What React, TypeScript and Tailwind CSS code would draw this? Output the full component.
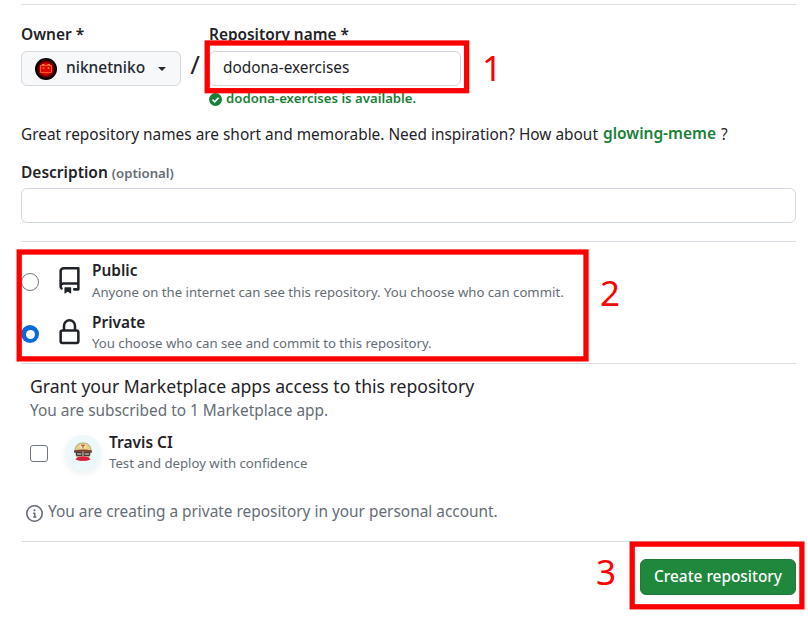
import React from "react";

const Divider = () => <div className="h-px w-full shrink-0 bg-[#d8dee4]" />;

const RepoIcon = () => (
  <svg viewBox="0 0 16 16" className="h-[27px] w-[27px]" fill="#1f2328">
    <path d="M2 2.5A2.5 2.5 0 0 1 4.5 0h8.75a.75.75 0 0 1 .75.75v12.5a.75.75 0 0 1-.75.75h-2.5a.75.75 0 0 1 0-1.5h1.75v-2h-8a1 1 0 0 0-.714 1.7.75.75 0 1 1-1.072 1.05A2.495 2.495 0 0 1 2 11.5Zm10.5-1h-8a1 1 0 0 0-1 1v6.708A2.486 2.486 0 0 1 4.5 9h8ZM5 12.25a.25.25 0 0 1 .25-.25h3.5a.25.25 0 0 1 .25.25v3.25a.25.25 0 0 1-.4.2l-1.45-1.087a.249.249 0 0 0-.3 0L5.4 15.7a.25.25 0 0 1-.4-.2Z" />
  </svg>
);

const LockIcon = () => (
  <svg viewBox="0 0 16 16" className="h-[27px] w-[27px]" fill="#1f2328">
    <path d="M4 4a4 4 0 0 1 8 0v2h.25c.966 0 1.75.784 1.75 1.75v5.5A1.75 1.75 0 0 1 12.25 15h-8.5A1.75 1.75 0 0 1 2 13.25v-5.5C2 6.784 2.784 6 3.75 6H4Zm8.25 3.5h-8.5a.25.25 0 0 0-.25.25v5.5c0 .138.112.25.25.25h8.5a.25.25 0 0 0 .25-.25v-5.5a.25.25 0 0 0-.25-.25ZM10.5 6V4a2.5 2.5 0 1 0-5 0v2Z" />
  </svg>
);

const Avatar = () => (
  <svg viewBox="0 0 22 22" className="h-[22px] w-[22px]">
    <defs>
      <radialGradient id="glow">
        <stop offset="0" stopColor="#f00" />
        <stop offset=".5" stopColor="#d00" />
        <stop offset=".8" stopColor="#200" />
        <stop offset="1" stopColor="#000" />
      </radialGradient>
    </defs>
    <circle cx="11" cy="11" r="11" fill="url(#glow)" />
    <path d="M5.500 7.500h11v7h-11z" fill="#e10600" stroke="#ff5a1f" strokeWidth="1" />
    <path d="M7 6.500h2.500M12.500 6.500H15M7.500 10h2M12.500 10h2M13.500 9v2" fill="none" stroke="#ff8a3a" strokeWidth="1" />
  </svg>
);

const TravisLogo = () => (
  <svg viewBox="0 0 20 20" className="h-5 w-5">
    <path d="M2 9C2 4 5 1 10 1s8 3 8 8z" fill="#e8d385" stroke="#8f8559" strokeWidth=".7" />
    <path d="M7.300 2.200h5.400v4.200H7.300z" fill="#f4e6b0" />
    <path d="M8 3.200h4M10 3.200v3" stroke="#c23b3b" strokeWidth="1.100" />
    <path d="M2.500 9h15v4.500q-2 4-7.500 4t-7.500-4z" fill="#c9a88a" />
    <path d="M1 8.500q9-2 18 0v2.200q-9-2-18 0z" fill="#7a4038" />
    <path d="M3.200 10.500h5.600v3H3.800zM11.200 10.500h5.600l-.6 3h-5z" fill="#9b9387" stroke="#3f3c3a" strokeWidth="1.100" />
    <path d="M2.500 17.500q1.500-3.300 7.500-3 6-.3 7.500 3-3.500 1.700-7.500 1.300-4 .4-7.500-1.300z" fill="#d3203f" />
  </svg>
);

const options = [
  {
    name: "Public",
    text: "Anyone on the internet can see this repository. You choose who can commit.",
    icon: <RepoIcon />,
    radio: "border border-[#6e7781]",
    gap: "leading-[23px]",
  },
  {
    name: "Private",
    text: "You choose who can see and commit to this repository.",
    icon: <LockIcon />,
    radio: "bg-[#0969da]",
    gap: "leading-[21px]",
  },
];

export default function App() {
  return (
    <div className="relative h-[617px] w-[808px] overflow-hidden bg-white pt-1 pr-3 pl-[21px] font-['Noto_Sans',sans-serif] text-[15.4px] whitespace-nowrap text-[#1f2328]">
      <Divider />
      <div className="flex h-[103px] pt-[18px]">
        <div className="w-[160px]">
          <div className="h-[28px] text-[15.5px] leading-[22px] font-semibold">Owner *</div>
          <button className="flex h-[35px] w-[160px] items-center rounded-md border border-[#d5d8da] bg-[#f6f8fa] pl-[13px] text-[15.5px] font-medium text-[#24292f]">
            <Avatar />
            <span className="ml-[9px] pb-[3px] leading-[22px]">niknetniko</span>
            <span className="ml-[13px] border-x-[4px] border-t-[4px] border-x-transparent border-t-[#24292f]" />
          </button>
        </div>
        <div className="w-[28px] pt-[25px] text-center text-[26px] leading-[32px]">/</div>
        <div className="w-[252px]">
          <div className="h-[28px] text-[15.4px] leading-[24px] font-semibold">Repository name *</div>
          <div className="flex h-[35px] items-center rounded-md border border-[#d0d7de] pb-px pl-[13px] leading-[22px]">dodona-exercises</div>
          <div className="flex h-[26px] items-center gap-1 text-[13.2px] font-semibold text-[#1a7f37]">
            <svg viewBox="0 0 16 16" className="h-[13px] w-[13px]">
              <circle cx="8" cy="8" r="8" fill="#1a7f37" />
              <path d="M4.300 8.200l2.700 2.700 4.800-5" fill="none" stroke="white" strokeWidth="2" />
            </svg>
            dodona-exercises is available.
          </div>
        </div>
      </div>
      <div className="mt-[15px] flex h-[22px] leading-[24px]">
        Great repository names are short and memorable. Need inspiration? How about
        <span className="ml-[5px] text-[15.5px] leading-[20px] font-semibold text-[#1a7f37]">glowing-meme</span>
        <span className="ml-[5px]">?</span>
      </div>
      <div className="mt-[16px] flex h-[27px] items-baseline text-[15.5px] leading-[22px] font-semibold">
        Description<span className="ml-1 text-[13.2px] text-[#656d76]">(optional)</span>
      </div>
      <div className="h-[35px] rounded-md border border-[#d0d7de]" />
      <div className="mt-[18px]"><Divider /></div>
      <div className="flex h-[121px] flex-col pt-[17px]">
        {options.map((o) => (
          <div key={o.name} className="flex h-[52px]">
            <div className={`mt-[14px] flex h-[18px] w-[18px] shrink-0 items-center justify-center rounded-full ${o.radio}`}>
              <span className="h-[9px] w-[9px] rounded-full bg-white" />
            </div>
            <div className="mt-[7.5px] ml-[17px]">{o.icon}</div>
            <div className="ml-[9px]">
              <div className="text-[15.4px] leading-[24px] font-semibold">{o.name}</div>
              <div className={`-mt-0.5 text-[13.18px] text-[#656d76] ${o.gap}`}>{o.text}</div>
            </div>
          </div>
        ))}
      </div>
      <Divider />
      <div className="pt-[9px] pl-[9px]">
        <div className="text-[17.6px] leading-[26px]">Grant your Marketplace apps access to this repository</div>
        <div className="h-[22px] leading-[24px] text-[#656d76]">You are subscribed to 1 Marketplace app.</div>
        <div className="mt-[10px] flex h-[46px]">
          <div className="mt-[14px] h-[17px] w-[18px] rounded-[3px] border border-[#6e7781]" />
          <div className="mt-[4px] ml-[17px] flex h-[36px] w-[36px] items-center justify-center rounded-full bg-[#edf8fa] pb-0.5 shadow-[0_3px_6px_rgba(140,149,159,0.15)]">
            <TravisLogo />
          </div>
          <div className="ml-[8px]">
            <div className="text-[15.5px] leading-[22px] font-semibold">Travis CI</div>
            <div className="text-[13.2px] leading-[21px] text-[#656d76]">Test and deploy with confidence</div>
          </div>
        </div>
      </div>
      <div className="mt-[23px] flex h-[22px] pl-[5px] leading-[24px] text-[#656d76]">
        <svg viewBox="0 0 16 16" className="mt-[5px] mr-[5px] h-[17px] w-[17px]" fill="#656d76">
          <path d="M0 8a8 8 0 1 1 16 0A8 8 0 0 1 0 8Zm8-6.500a6.500 6.500 0 1 0 0 13 6.500 6.500 0 0 0 0-13ZM6.500 7.750A.75.75 0 0 1 7.250 7h1a.75.75 0 0 1 .75.75v2.750h.250a.75.75 0 0 1 0 1.500h-2a.75.75 0 0 1 0-1.500h.250v-2h-.250a.75.75 0 0 1-.75-.75ZM8 6a1 1 0 1 1 0-2 1 1 0 0 1 0 2Z" />
        </svg>
        You are creating a private repository in your personal account.
      </div>
      <div className="mt-[19px]"><Divider /></div>
      <div className="flex justify-end pt-[17px]">
        <button className="h-[36px] w-[156px] rounded-md border border-[#1f7a37] bg-[#1f883d] leading-[22px] font-medium text-white">Create repository</button>
      </div>

      {/* Numbered tutorial highlights over the form */}
      <svg viewBox="0 0 808 617" className="absolute inset-0 h-[617px] w-[808px]" fill="none" stroke="#f00" strokeWidth="5.300">
        <rect x="207.200" y="43" width="259.400" height="47.700" />
        <rect x="19.200" y="252" width="566.800" height="106.900" />
        <rect x="632.200" y="544.100" width="169.700" height="62.700" />
      </svg>
      <div className="absolute top-[44px] left-[482px] text-[35px] leading-[48px] text-[#f00]">1</div>
      <div className="absolute top-[269px] left-[600px] text-[35px] leading-[48px] text-[#f00]">2</div>
      <div className="absolute top-[548px] left-[596px] text-[35px] leading-[48px] text-[#f00]">3</div>
    </div>
  );
}
